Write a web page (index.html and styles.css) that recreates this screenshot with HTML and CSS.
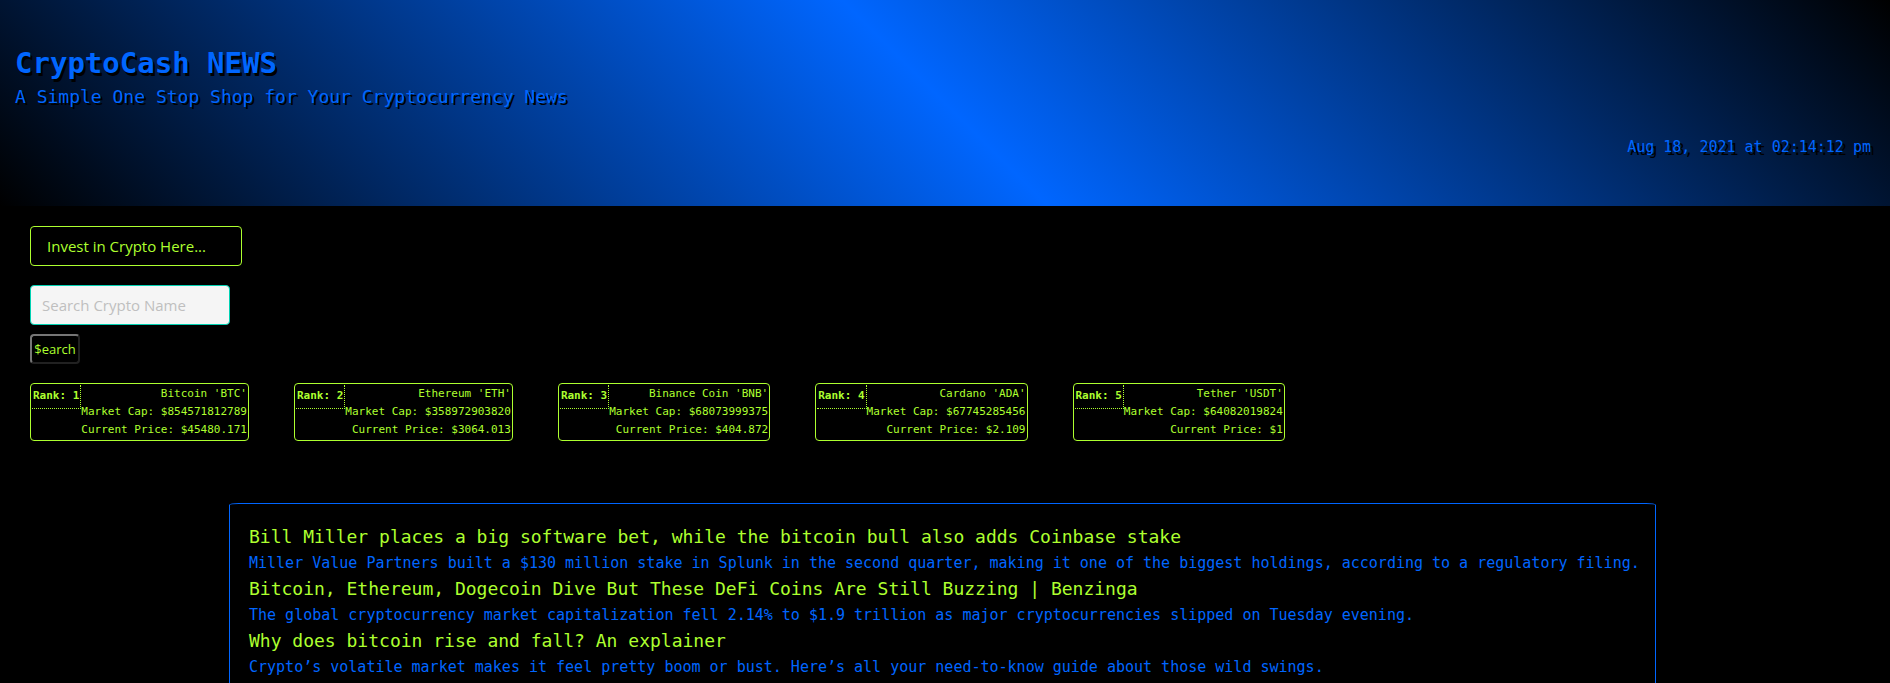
FILE: index.html
```html
<!DOCTYPE html>
<html lang="en">
<head>
<meta charset="utf-8">
<title>CryptoCash NEWS</title>
<link rel="stylesheet" href="styles.css">
</head>
<body>
<header class="hero">
  <h1 class="title">CryptoCash NEWS</h1>
  <p class="subtitle">A Simple One Stop Shop for Your Cryptocurrency News</p>
  <time class="clock" datetime="2021-08-18T14:14:12">Aug 18, 2021 at 02:14:12 pm</time>
</header>
<main class="page">
  <form class="tools">
    <select class="invest" aria-label="Invest in crypto">
      <option>Invest in Crypto Here...</option>
    </select>
    <input class="search" type="text" placeholder="Search Crypto Name" aria-label="Search crypto name">
    <button class="go" type="button">$earch</button>
  </form>
  <section class="coins">
    <article class="coin"><h2 class="rank">Rank: 1</h2><div class="facts"><p>Bitcoin 'BTC'</p><p>Market Cap: $854571812789</p><p>Current Price: $45480.171</p></div></article>
    <article class="coin"><h2 class="rank">Rank: 2</h2><div class="facts"><p>Ethereum 'ETH'</p><p>Market Cap: $358972903820</p><p>Current Price: $3064.013</p></div></article>
    <article class="coin"><h2 class="rank">Rank: 3</h2><div class="facts"><p>Binance Coin 'BNB'</p><p>Market Cap: $68073999375</p><p>Current Price: $404.872</p></div></article>
    <article class="coin"><h2 class="rank">Rank: 4</h2><div class="facts"><p>Cardano 'ADA'</p><p>Market Cap: $67745285456</p><p>Current Price: $2.109</p></div></article>
    <article class="coin"><h2 class="rank">Rank: 5</h2><div class="facts"><p>Tether 'USDT'</p><p>Market Cap: $64082019824</p><p>Current Price: $1</p></div></article>
  </section>
  <section class="news">
    <a class="headline" href="#">Bill Miller places a big software bet, while the bitcoin bull also adds Coinbase stake</a>
    <p class="summary">Miller Value Partners built a $130 million stake in Splunk in the second quarter, making it one of the biggest holdings, according to a regulatory filing.</p>
    <a class="headline" href="#">Bitcoin, Ethereum, Dogecoin Dive But These DeFi Coins Are Still Buzzing | Benzinga</a>
    <p class="summary">The global cryptocurrency market capitalization fell 2.14% to $1.9 trillion as major cryptocurrencies slipped on Tuesday evening.</p>
    <a class="headline" href="#">Why does bitcoin rise and fall? An explainer</a>
    <p class="summary">Crypto’s volatile market makes it feel pretty boom or bust. Here’s all your need-to-know guide about those wild swings.</p>
  </section>
</main>
</body>
</html>
```
FILE: styles.css
```css
* {
  box-sizing: border-box;
  margin: 0;
  padding: 0;
}

body {
  display: flex;
  flex-direction: column;
  min-height: 100vh;
  background: #000;
  color: #adff2f;
  font-family: Consolas, "DejaVu Sans Mono", monospace;
  font-size: 15px;
}

.hero {
  display: flex;
  flex-direction: column;
  padding: 43px 19px 45px 15px;
  background: linear-gradient(45deg, #000, #0066ff, #000);
  color: #0066ff;
}

.title {
  font-size: 29px;
  line-height: 40px;
  text-shadow: 2px 3px #000;
}

.subtitle {
  font-size: 18px;
  line-height: 28px;
  text-shadow: 2px 2px #000;
}

.clock {
  align-self: flex-end;
  margin-top: 22px;
  line-height: 28px;
  text-shadow: 3px 3px #000;
}

.page {
  display: flex;
  flex: 1;
  flex-direction: column;
  padding-top: 20px;
}

.tools {
  display: flex;
  flex-direction: column;
  align-items: flex-start;
  padding-left: 30px;
}

.invest,
.search {
  height: 40px;
  border: 1px solid #adff2f;
  border-radius: 4px;
  font-family: "Segoe UI", "Open Sans", sans-serif;
  font-size: 15px;
}

.invest {
  width: 212px;
  padding: 0 16px;
  appearance: none;
  background: #000;
  color: #adff2f;
}

.search {
  width: 200px;
  margin-top: 19px;
  padding: 0 11px;
  border-color: #00d1b2;
  background: #f5f5f5;
}

.search::placeholder {
  color: #bfbfbf;
}

.go {
  width: 50px;
  height: 30px;
  margin-top: 9px;
  border: 2px solid;
  border-color: #767676 #212121 #212121 #767676;
  border-radius: 4px;
  background: #000;
  color: #adff2f;
  font-family: "Segoe UI", "Open Sans", sans-serif;
  font-size: 13px;
}

.coins {
  display: flex;
  flex-wrap: wrap;
  gap: 45px;
  margin-top: 19px;
  padding-left: 30px;
}

.coin {
  display: flex;
  align-items: flex-start;
  padding: 1px;
  border: 1px solid #adff2f;
  border-radius: 4px;
  font-size: 11px;
  line-height: 18px;
}

.rank {
  padding: 2px 1px 3px;
  border: dotted #adff2f;
  border-width: 0 1px 1px 0;
  font-size: 11px;
}

.facts {
  text-align: right;
}

.news {
  flex: 1;
  width: 75.5%;
  margin: 62px 0 0 229px;
  padding: 19px 10px 0 19px;
  border: 1px solid #0066ff;
  border-bottom: 0;
  border-radius: 10px 10px 0 0 / 2px 2px 0 0;
}

.headline {
  display: block;
  color: #adff2f;
  font-size: 18px;
  line-height: 28px;
  text-decoration: none;
}

.summary {
  color: #0066ff;
  line-height: 24px;
}
```
